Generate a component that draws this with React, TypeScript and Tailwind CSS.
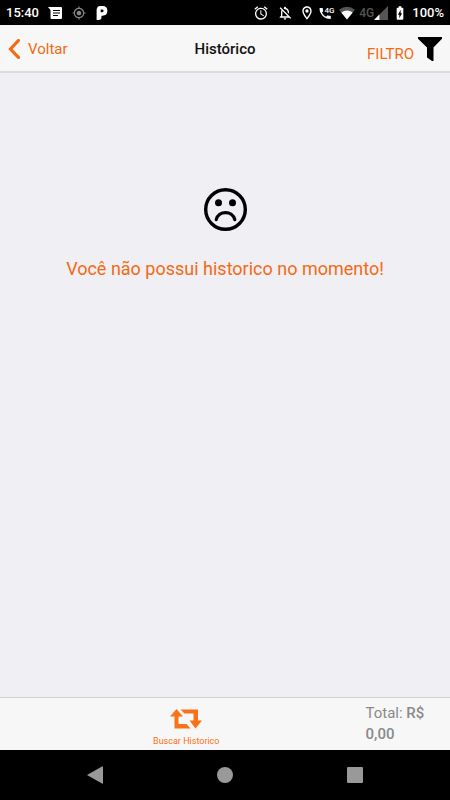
import { MdAlarm, MdBatteryChargingFull, MdGpsFixed, MdOutlineLocationOn, MdOutlineNotificationsOff } from "react-icons/md";

const MessageIcon = () => (
  <svg viewBox="0 0 14 12" className="h-3 w-3.5" fill="currentColor" aria-hidden="true">
    <path d="M0 0H13Q14 0 14 1V11Q14 12 13 12H3.500Q2.500 12 2.500 11V3Z" />
    <path d="M5 3.500H12M5 6H12M5 8.500H10" stroke="#000" strokeWidth="1" />
  </svg>
);

const PandoraIcon = () => (
  <svg viewBox="0 0 11 13" className="h-3.5 w-3" fill="none" aria-hidden="true">
    <path d="M0.500 13V4Q0.500 0 4 0H6Q10.500 0 10.500 4.500Q10.500 9 6 9H5V10.500Q5 13 2.500 13Z" fill="currentColor" />
    <path d="M4.300 3.200H5.600Q7 3.200 7 4.500Q7 5.800 5.600 5.800H4.300Z" fill="#000" />
  </svg>
);

const CallIcon = () => (
  <svg viewBox="0 0 16 14" className="h-3.5 w-4" aria-hidden="true">
    <path
      d="M0.500 2.500Q0.500 2 1 2H3.300Q3.800 2 3.800 2.500Q3.800 4 4.300 5.100L3 6.700Q4.400 9.500 7 10.700L8.500 9.300Q10 9.800 11.300 9.800Q11.800 9.800 11.800 10.300V12.600Q11.800 13 11.300 13C5.500 13 0.500 8.300 0.500 2.500Z"
      fill="currentColor"
    />
    <text x="5.500" y="6.500" fontSize="8" fontWeight="500" fill="currentColor">
      4G
    </text>
  </svg>
);

const WifiIcon = () => (
  <svg viewBox="0 0 16 13" className="h-3.5 w-4" aria-hidden="true">
    <path d="M0 3.200Q8 -2.500 16 3.200L8 13Z" fill="#555" />
    <path d="M2.300 6Q8 2 13.700 6L8 13Z" fill="currentColor" />
  </svg>
);

const SignalIcon = () => (
  <svg viewBox="0 0 13 13" className="h-3.5 w-3.5" aria-hidden="true">
    <path d="M13 0V13H0Z" fill="#555" />
    <path d="M5 8V13H0Z" fill="currentColor" />
  </svg>
);

const BackIcon = () => (
  <svg viewBox="0 0 12 20" className="h-5 w-3" fill="none" stroke="currentColor" strokeWidth="3.200" aria-hidden="true">
    <path d="M10.500 1.500L2.500 10L10.500 18.500" strokeLinecap="square" />
  </svg>
);

const FunnelIcon = () => (
  <svg viewBox="0 0 24 24" className="h-6 w-6" fill="#000" aria-hidden="true">
    <path d="M0 0H24V1.800L15.500 10.500V24H14L9 20.500V10.500L0 1.800Z" />
  </svg>
);

const SadIcon = () => (
  <svg viewBox="0 0 44 44" className="h-11 w-11" fill="none" stroke="#000" aria-hidden="true">
    <circle cx="22.500" cy="21.500" r="19.800" strokeWidth="3.400" />
    <circle cx="15.500" cy="14.800" r="3.500" fill="#000" stroke="none" />
    <circle cx="29.500" cy="14.800" r="3.500" fill="#000" stroke="none" />
    <path d="M13.200 31.700C15.500 22.300 29.500 22.300 31.800 31.700" strokeWidth="3.200" strokeLinecap="round" />
  </svg>
);

const RepeatIcon = () => (
  <svg viewBox="0 0 32 20" className="h-5 w-8" fill="currentColor" aria-hidden="true">
    <path d="M6.500 0L13 7.500H8.500V15H16.500L20.500 19.500H4.500V7.500H0Z" />
    <path d="M25.500 19.500L32 11.500H28V0.500H10.500L14.500 4.500H23.500V11.500H19.500Z" />
  </svg>
);

const StatusBar = () => (
  <div className="flex h-[25px] shrink-0 items-center justify-between bg-black px-1.5 pt-px text-white">
    <div className="flex items-center">
      <span className="w-[42px] text-[13px] font-medium">15:40</span>
      <MessageIcon />
      <MdGpsFixed className="ml-2.5 size-3.5 text-[#888]" />
      <span className="ml-2.5">
        <PandoraIcon />
      </span>
    </div>
    <div className="flex items-center">
      <MdAlarm className="mr-2 size-4" />
      <MdOutlineNotificationsOff className="mr-1.5 size-4" />
      <MdOutlineLocationOn className="mr-1 size-4" />
      <CallIcon />
      <span className="ml-1">
        <WifiIcon />
      </span>
      <span className="ml-1 text-xs font-medium text-[#555]">4G</span>
      <SignalIcon />
      <MdBatteryChargingFull className="mx-1 size-4" />
      <span className="text-[13px] font-medium">100%</span>
    </div>
  </div>
);

const Header = () => (
  <header className="grid h-12 shrink-0 grid-cols-3 items-center border-b-2 border-[#dcdcde] bg-[#f7f7f7] px-2 pt-0.5">
    <button type="button" className="flex items-center gap-2 justify-self-start text-[#f56a12]">
      <BackIcon />
      <span className="text-[15px]">Voltar</span>
    </button>
    <h1 className="text-center text-[15px] font-medium text-[#111]">Histórico</h1>
    <button type="button" className="flex items-end gap-1 justify-self-end text-[#f56a12]">
      <span className="text-[15px] leading-3.5">FILTRO</span>
      <FunnelIcon />
    </button>
  </header>
);

const Toolbar = () => (
  <footer className="grid h-[53px] shrink-0 grid-cols-[81%_19%] items-center border-t border-[#d0d0d2] bg-[#f7f7f7]">
    <button type="button" className="flex flex-col items-center justify-self-center pl-2 pt-2 text-[#f97316]">
      <RepeatIcon />
      <span className="mt-1.5 text-[9px] leading-3">Buscar Historico</span>
    </button>
    <p className="w-17 justify-self-start pl-px text-[15px] leading-[21px] text-[#8a8a8a]">
      Total: <b className="font-medium">R$</b> <b className="font-medium">0,00</b>
    </p>
  </footer>
);

const SystemNav = () => (
  <nav className="grid h-[50px] shrink-0 grid-cols-[1fr_84px_1fr] items-center bg-black text-[#999]">
    <button type="button" aria-label="Voltar" className="mr-20 justify-self-end">
      <svg viewBox="0 0 16 18" className="h-4.5 w-4" fill="currentColor" aria-hidden="true">
        <path d="M0 9L15 0.500Q16 0 16 1V17Q16 18 15 17.500Z" />
      </svg>
    </button>
    <button type="button" aria-label="Início" className="size-4 justify-self-center rounded-full bg-current" />
    <button type="button" aria-label="Recentes" className="ml-20 size-4 rounded-[1px] bg-current" />
  </nav>
);

const App = () => {
  return (
    <div className="flex min-h-screen flex-col bg-[#efeff4] font-[Roboto,sans-serif]">
      <StatusBar />
      <Header />
      <main className="flex flex-1 flex-col items-center px-4 pt-[115px]">
        <SadIcon />
        <p className="mt-[23px] text-center text-lg text-[#f56a12]">Você não possui historico no momento!</p>
      </main>
      <Toolbar />
      <SystemNav />
    </div>
  );
};

export default App;
